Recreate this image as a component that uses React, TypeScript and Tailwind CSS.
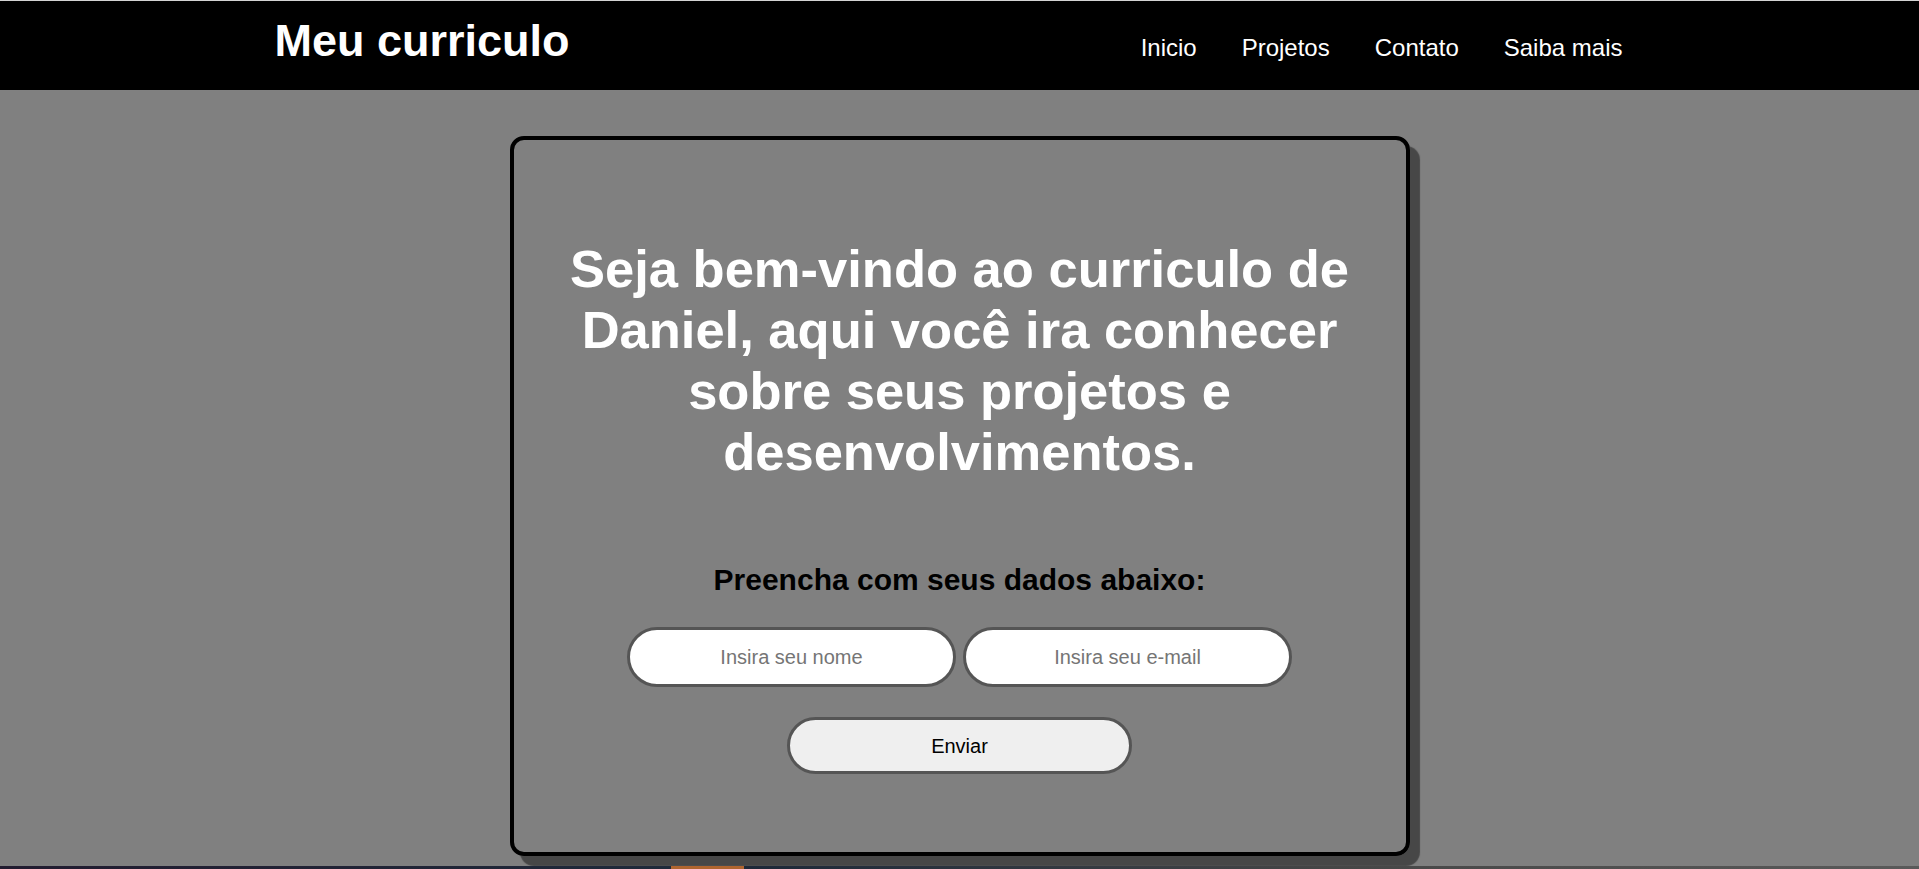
export default function App() {
  return (
    <div className="min-h-screen bg-[#808080] font-['Liberation_Sans',Arial,sans-serif]">
      <header className="h-[90px] border-t border-[#d3d3d3] bg-black">
        <div className="mx-auto flex w-[1370px] items-baseline justify-between pt-[14px]">
          <h1 className="text-[45px] font-bold leading-[52px] text-white">Meu curriculo</h1>
          <nav className="flex gap-[45px] pr-[22px] text-[24px] text-white">
            <a href="#">Inicio</a>
            <a href="#">Projetos</a>
            <a href="#">Contato</a>
            <a href="#">Saiba mais</a>
          </nav>
        </div>
      </header>

      <main className="h-[776px] pt-[46px]">
        <div className="mx-auto flex h-[720px] w-[900px] flex-col items-center rounded-[14px] border-4 border-black px-[40px] pt-[98px] shadow-[10px_10px_1px_#474747]">
          <h2 className="text-center text-[52.5px] font-bold leading-[61px] text-white">
            Seja bem-vindo ao curriculo de Daniel, aqui você ira conhecer sobre seus projetos e desenvolvimentos.
          </h2>
          <h3 className="mt-[80px] text-[30px] font-bold leading-[35px] text-black">
            Preencha com seus dados abaixo:
          </h3>
          <div className="mt-[30px] flex gap-[7px]">
            <input
              type="text"
              placeholder="Insira seu nome"
              className="h-[60px] w-[329px] rounded-full border-[3px] border-[#555555] bg-white text-center text-[20px] outline-none placeholder:text-[#757575]"
            />
            <input
              type="email"
              placeholder="Insira seu e-mail"
              className="h-[60px] w-[329px] rounded-full border-[3px] border-[#555555] bg-white text-center text-[20px] outline-none placeholder:text-[#757575]"
            />
          </div>
          <button className="mt-[30px] h-[57px] w-[345px] rounded-full border-[3px] border-[#555555] bg-[#efefef] text-[20px] text-black">
            Enviar
          </button>
        </div>
      </main>

      <div className="flex h-[3px]">
        <div className="w-[671px] bg-gradient-to-r from-[#221c30] to-[#1f2a3a]" />
        <div className="w-[73px] bg-[#b0652f]" />
        <div className="flex-1 bg-gradient-to-r from-[#1d2838] via-[#464646] to-[#5a5a5a]" />
      </div>
    </div>
  )
}
